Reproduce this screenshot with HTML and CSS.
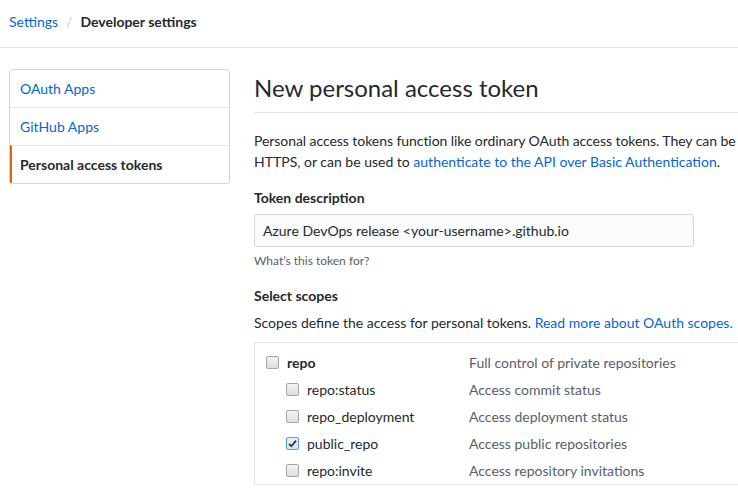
FILE: index.html
```html
<!DOCTYPE html>
<html>
<head>
<meta charset="utf-8">
<link rel="stylesheet" href="styles.css">
</head>
<body>
<header class="crumbs">
  <a class="link" href="#">Settings</a>
  <span class="sep">/</span>
  <strong class="current">Developer settings</strong>
</header>
<div class="layout">
  <nav class="side">
    <a class="side-item" href="#">OAuth Apps</a>
    <a class="side-item" href="#">GitHub Apps</a>
    <a class="side-item selected" href="#">Personal access tokens</a>
  </nav>
  <main class="main">
    <h1 class="title">New personal access token</h1>
    <p class="intro"><span class="tight">Personal access tokens function like ordinary OAuth access tokens. They can be</span><br>HTTPS, or can be used to <a class="link" href="#">authenticate to the API over Basic Authentication</a>.</p>
    <label class="label">Token description</label>
    <div class="input">Azure DevOps release &lt;your-username&gt;.github.io</div>
    <p class="hint">What’s this token for?</p>
    <h3 class="label scopes-title">Select scopes</h3>
    <p class="scopes-text">Scopes define the access for personal tokens. <a class="link" href="#">Read more about OAuth scopes.</a></p>
    <div class="scopes">
      <div class="row">
        <span class="cb"></span>
        <span class="name top">repo</span>
        <span class="desc">Full control of private repositories</span>
      </div>
      <div class="row sub">
        <span class="cb"></span>
        <span class="name">repo:status</span>
        <span class="desc">Access commit status</span>
      </div>
      <div class="row sub">
        <span class="cb"></span>
        <span class="name">repo_deployment</span>
        <span class="desc">Access deployment status</span>
      </div>
      <div class="row sub">
        <span class="cb checked"><svg width="9" height="9" viewBox="0 0 9 9"><path d="M1 4.8 L3.4 7.2 L8 1.6" fill="none" stroke="#333" stroke-width="1.8"/></svg></span>
        <span class="name">public_repo</span>
        <span class="desc">Access public repositories</span>
      </div>
      <div class="row sub">
        <span class="cb"></span>
        <span class="name">repo:invite</span>
        <span class="desc">Access repository invitations</span>
      </div>
    </div>
  </main>
</div>
</body>
</html>
```

FILE: styles.css
```css
html, body {
  margin: 0;
  padding: 0;
  background: #fff;
  overflow: hidden;
}
body {
  font-family: "Lato", "Open Sans", sans-serif;
  font-size: 14px;
  line-height: 21px;
  color: #24292e;
  width: 738px;
  height: 493px;
}
a { text-decoration: none; }
.link { color: #0366d6; }

.crumbs {
  border-bottom: 1px solid #e1e4e8;
  padding: 11px 0 0 9px;
  box-sizing: border-box;
  height: 48px;
  display: flex;
  align-items: flex-start;
  white-space: nowrap;
}
.sep {
  color: #c6cbd1;
  margin: 0 8px 0 8px;
}
.current { font-weight: 700; }

.layout {
  display: flex;
  gap: 24px;
  padding: 21px 0 0 9px;
}
.side {
  flex: 0 0 221px;
  border: 1px solid #d1d5da;
  border-radius: 3px;
  align-self: flex-start;
  display: flex;
  flex-direction: column;
  box-sizing: border-box;
}
.side-item {
  display: block;
  padding: 8px 10px;
  line-height: 21px;
  color: #0366d6;
  border-top: 1px solid #e1e4e8;
}
.side-item:first-child { border-top: 0; }
.side-item.selected {
  color: #24292e;
  font-weight: 700;
  border-left: 2px solid #e36209;
  padding-left: 8px;
}

.main {
  flex: 0 0 484px;
  white-space: nowrap;
}
.title {
  margin: 4px 0 0 0;
  font-size: 24px;
  font-weight: 400;
  line-height: 30px;
  padding-bottom: 9px;
  border-bottom: 1px solid #e1e4e8;
  margin-right: -100px;
}
.intro {
  margin: 17px 0 0 0;
}
.tight { letter-spacing: -0.06px; }
.label {
  display: block;
  margin: 15px 0 0 0;
  font-size: 14px;
  font-weight: 700;
  line-height: 21px;
}
.input {
  margin-top: 6px;
  width: 440px;
  height: 33px;
  box-sizing: border-box;
  border: 1px solid #d1d5da;
  border-radius: 3px;
  background: #fafbfc;
  padding: 5px 8px;
  line-height: 21px;
}
.hint {
  margin: 5px 0 0 0;
  font-size: 12px;
  line-height: 18px;
  color: #586069;
}
.scopes-title { margin-top: 15px; }
.scopes-text { margin: 6px 0 0 0; }

.scopes {
  margin-top: 9px;
  margin-right: -100px;
  border: 1px solid #e1e4e8;
  border-right: 0;
  border-radius: 3px 0 0 0;
  padding: 6px 0 0 11px;
}
.row {
  display: flex;
  align-items: center;
  height: 27px;
}
.row.sub { padding-left: 20px; }
.cb {
  flex: 0 0 auto;
  width: 13px;
  height: 13px;
  box-sizing: border-box;
  border: 1px solid #a6a6a6;
  border-radius: 2px;
  background: linear-gradient(#f4f4f4, #dedede);
  margin-right: 8px;
  display: flex;
  align-items: center;
  justify-content: center;
}
.cb.checked {
  border-color: #5b9bd5;
  background: linear-gradient(#e8f2fc, #d2e6fa);
}
.name {
  flex: 0 0 182px;
}
.row.sub .name { flex-basis: 162px; }
.name.top { font-weight: 700; }
.desc { color: #586069; }
```
